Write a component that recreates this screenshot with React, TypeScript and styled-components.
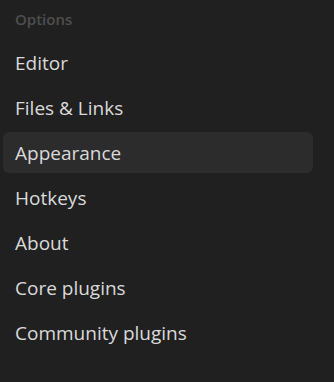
import { createGlobalStyle, styled } from "styled-components";

const items = [
  "Editor",
  "Files & Links",
  "Appearance",
  "Hotkeys",
  "About",
  "Core plugins",
  "Community plugins",
];

export default function App() {
  return (
    <>
      <GlobalStyle />
      <Sidebar>
        <Heading>Options</Heading>
        <List>
          {items.map((label) => (
            <Item key={label} $active={label === "Appearance"}>
              {label}
            </Item>
          ))}
        </List>
      </Sidebar>
    </>
  );
}

const GlobalStyle = createGlobalStyle`
  html, body {
    margin: 0;
    background: #202020;
  }
`;

const Sidebar = styled.nav`
  width: 334px;
  height: 382px;
  box-sizing: border-box;
  padding: 8px 21px 0 3px;
  font-family: "Open Sans", "Noto Sans", sans-serif;
  background: #202020;
`;

const Heading = styled.div`
  padding: 0 12px;
  height: 22px;
  line-height: 22px;
  font-size: 15px;
  font-weight: 600;
  color: #4e4e4e;
`;

const List = styled.div`
  display: flex;
  flex-direction: column;
  gap: 4px;
  margin-top: 12px;
`;

const Item = styled.div<{ $active?: boolean }>`
  height: 41px;
  display: flex;
  align-items: center;
  padding: 0 12px;
  border-radius: 6px;
  font-size: 19px;
  color: #dadada;
  background: ${(p) => (p.$active ? "#2c2c2c" : "transparent")};
`;
